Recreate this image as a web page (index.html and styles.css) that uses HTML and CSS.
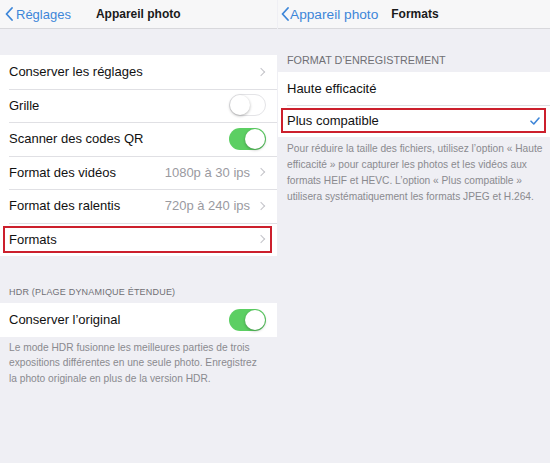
FILE: index.html
```html
<!DOCTYPE html>
<html lang="fr">
<head>
<meta charset="utf-8">
<link rel="stylesheet" href="styles.css">
</head>
<body>
<div class="screens">
  <section class="panel left">
    <header class="nav">
      <span class="back">
        <svg class="chev-back" width="8" height="14" viewBox="0 0 8 14"><path d="M7 1 L1.5 7 L7 13" fill="none" stroke="currentColor" stroke-width="1.8" stroke-linecap="round" stroke-linejoin="round"/></svg>
        Réglages
      </span>
      <span class="title title-left">Appareil photo</span>
    </header>
    <div class="gap-top"></div>
    <ul class="group">
      <li class="row"><span class="label">Conserver les réglages</span><span class="acc"><i class="chev"></i></span></li>
      <li class="row"><span class="label">Grille</span><span class="toggle off"><i></i></span></li>
      <li class="row"><span class="label">Scanner des codes QR</span><span class="toggle on"><i></i></span></li>
      <li class="row"><span class="label">Format des vidéos</span><span class="acc"><span class="value">1080p à 30 ips</span><i class="chev"></i></span></li>
      <li class="row"><span class="label">Format des ralentis</span><span class="acc"><span class="value">720p à 240 ips</span><i class="chev"></i></span></li>
      <li class="row boxed-left"><span class="label">Formats</span><span class="acc"><i class="chev"></i></span></li>
    </ul>
    <div class="section-head hdr-head">HDR (PLAGE DYNAMIQUE ÉTENDUE)</div>
    <ul class="group">
      <li class="row"><span class="label">Conserver l’original</span><span class="toggle on"><i></i></span></li>
    </ul>
    <p class="foot">Le mode HDR fusionne les meilleures parties de trois expositions différentes en une seule photo. Enregistrez la photo originale en plus de la version HDR.</p>
  </section>
  <section class="panel right">
    <header class="nav">
      <span class="back back-right">
        <svg class="chev-back" width="8" height="14" viewBox="0 0 8 14"><path d="M7 1 L1.5 7 L7 13" fill="none" stroke="currentColor" stroke-width="1.8" stroke-linecap="round" stroke-linejoin="round"/></svg>
        Appareil photo
      </span>
      <span class="title title-right">Formats</span>
    </header>
    <div class="section-head fmt-head">FORMAT D’ENREGISTREMENT</div>
    <ul class="group">
      <li class="row r-row"><span class="label">Haute efficacité</span></li>
      <li class="row r-row boxed-right"><span class="label">Plus compatible</span>
        <svg class="check" width="10" height="8" viewBox="0 0 10 8"><path d="M1 4.2 L3.8 7 L9 1" fill="none" stroke="#3f86d8" stroke-width="1.6" stroke-linecap="round" stroke-linejoin="round"/></svg>
      </li>
    </ul>
    <p class="foot foot-right">Pour réduire la taille des fichiers, utilisez l’option « Haute<br>efficacité » pour capturer les photos et les vidéos aux<br>formats HEIF et HEVC. L’option « Plus compatible »<br>utilisera systématiquement les formats JPEG et H.264.</p>
  </section>
</div>
</body>
</html>
```
FILE: styles.css
```css
* { box-sizing: border-box; }
html, body {
  margin: 0;
  padding: 0;
  width: 550px;
  height: 463px;
  overflow: hidden;
  background: #efeff4;
  font-family: "Liberation Sans", Arial, sans-serif;
  color: #111;
}
.screens {
  display: flex;
  height: 463px;
}
.panel {
  display: flex;
  flex-direction: column;
  background: #efeff4;
}
.left { width: 277px; }
.right { flex: 1; margin-left: 1px; }

.nav {
  height: 29px;
  background: #f7f7f8;
  border-bottom: 1px solid #d8d8dc;
  display: flex;
  align-items: center;
  font-size: 13px;
}
.back {
  display: flex;
  align-items: center;
  gap: 3px;
  color: #3d86d9;
  padding-left: 5px;
}
.back-right { padding-left: 3px; gap: 1px; font-size: 13.7px; }
.chev-back { display: block; }
.title {
  font-weight: bold;
  font-size: 12px;
  color: #1a1a1a;
}
.title-left { margin-left: 25px; }
.title-right { margin-left: 13px; }

.gap-top { height: 26px; }

.group {
  list-style: none;
  margin: 0;
  padding: 0;
  background: #fff;
}
.row {
  position: relative;
  height: 33.5px;
  display: flex;
  align-items: center;
  justify-content: space-between;
  padding: 0 10px 0 9px;
  font-size: 13px;
}
.row + .row::before {
  content: "";
  position: absolute;
  top: 0;
  left: 9px;
  right: 0;
  border-top: 1px solid #e0e0e4;
}
.acc {
  display: flex;
  align-items: center;
  gap: 8px;
}
.value { color: #9a9a9f; }
.chev {
  display: block;
  width: 6px;
  height: 6px;
  border-right: 1.3px solid #c4c4c9;
  border-top: 1.3px solid #c4c4c9;
  transform: rotate(45deg);
  margin-right: 3px;
}
.toggle {
  position: relative;
  width: 37px;
  height: 22px;
  border-radius: 11px;
  margin-right: 1px;
}
.toggle.off {
  background: #fff;
  border: 1.5px solid #e4e4e7;
}
.toggle.on { background: #5ccf63; }
.toggle i {
  position: absolute;
  top: 1px;
  width: 20px;
  height: 20px;
  border-radius: 50%;
  background: #fff;
  box-shadow: 0 1px 3px rgba(0,0,0,0.3);
}
.toggle.off i { left: 0; top: 0; }
.toggle.on i { right: 1px; }

.boxed-left::after,
.boxed-right::after {
  content: "";
  position: absolute;
  border: 2px solid #cc1f2c;
}
.boxed-left::after { left: 3px; right: 5px; top: 3px; bottom: 3px; }
.boxed-right::after { left: 3px; right: 4px; top: 3px; bottom: 4px; }

.section-head {
  font-size: 9px;
  color: #707075;
  letter-spacing: 0.2px;
  padding-left: 9px;
}
.hdr-head { height: 47px; display: flex; align-items: flex-end; padding-bottom: 6px; }
.fmt-head { height: 43px; display: flex; align-items: flex-end; padding-bottom: 6px; font-size: 10.8px; letter-spacing: 0; }

.foot {
  margin: 0;
  padding: 3px 20px 0 9px;
  font-size: 10.2px;
  line-height: 15.5px;
  color: #8a8a8f;
}
.r-row { height: 32.5px; padding-right: 9px; }
.check { display: block; margin-right: 1px; }
.foot-right {
  padding: 4px 0 0 9px;
  font-size: 10.2px;
  line-height: 16px;
  white-space: nowrap;
}
```
